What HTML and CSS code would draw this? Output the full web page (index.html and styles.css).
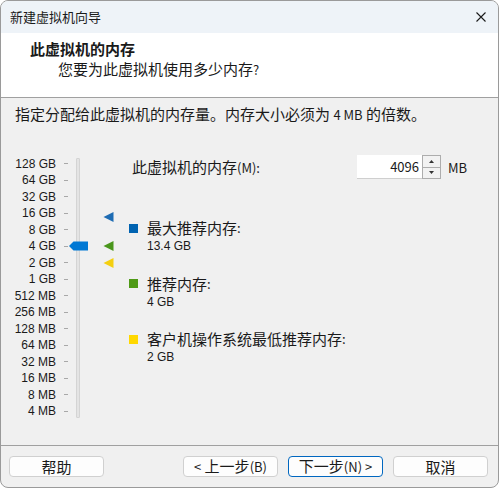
FILE: index.html
```html
<!DOCTYPE html>
<html lang="zh-CN">
<head>
    <meta charset="UTF-8">
    <meta name="viewport" content="width=device-width, initial-scale=1.0">
    <title>新建虚拟机向导</title>
    <link rel="stylesheet" href="styles.css">
</head>
<body>
    <div class="window">
        <!-- 标题栏 -->
        <div class="titlebar">
            <span class="title">新建虚拟机向导</span>
            <svg class="close" width="10" height="10" viewBox="0 0 10 10">
                <path d="M0.5 0.5 L9.5 9.5 M9.5 0.5 L0.5 9.5" stroke="#1a1a1a" stroke-width="1.1" fill="none"/>
            </svg>
        </div>

        <!-- 页眉 -->
        <div class="header">
            <div class="head-title">此虚拟机的内存</div>
            <div class="head-sub">您要为此虚拟机使用多少内存<span class="latin">?</span></div>
        </div>

        <!-- 内容 -->
        <div class="content">
            <p class="desc">指定分配给此虚拟机的内存量。内存大小必须为 <span class="latin">4 MB</span> 的倍数。</p>

            <div class="main">
                <div class="scale">
                    <ul class="labels">
                        <li><span>128 GB</span><i></i></li>
                        <li><span>64 GB</span><i></i></li>
                        <li><span>32 GB</span><i></i></li>
                        <li><span>16 GB</span><i></i></li>
                        <li><span>8 GB</span><i></i></li>
                        <li><span>4 GB</span><i></i></li>
                        <li><span>2 GB</span><i></i></li>
                        <li><span>1 GB</span><i></i></li>
                        <li><span>512 MB</span><i></i></li>
                        <li><span>256 MB</span><i></i></li>
                        <li><span>128 MB</span><i></i></li>
                        <li><span>64 MB</span><i></i></li>
                        <li><span>32 MB</span><i></i></li>
                        <li><span>16 MB</span><i></i></li>
                        <li><span>8 MB</span><i></i></li>
                        <li><span>4 MB</span><i></i></li>
                    </ul>
                    <div class="track"></div>

                    <!-- 滑块和标记 -->
                    <svg class="thumb" width="20" height="10" viewBox="0 0 20 10">
                        <path d="M0 5 L4.5 0.5 L19 0.5 L19 9.5 L4.5 9.5 Z" fill="#0078d4"/>
                    </svg>
                    <svg class="marker" style="top: 56px" width="11" height="10" viewBox="0 0 11 10">
                        <path d="M0.5 5 L10.5 0 L10.5 10 Z" fill="#1e6cb3"/>
                    </svg>
                    <svg class="marker" style="top: 85.5px" width="11" height="10" viewBox="0 0 11 10">
                        <path d="M0.5 5 L10.5 0 L10.5 10 Z" fill="#4a961c"/>
                    </svg>
                    <svg class="marker" style="top: 102px" width="11" height="10" viewBox="0 0 11 10">
                        <path d="M0.5 5 L10.5 0 L10.5 10 Z" fill="#f4cf10"/>
                    </svg>
                </div>

                <div class="panel">
                    <div class="mem-row">
                        <label class="mem-label">此虚拟机的内存<span class="latin">(M):</span></label>
                        <div class="spin">
                            <div class="spin-input">4096</div>
                            <div class="spin-btns">
                                <div class="spin-btn"><svg width="5" height="3" viewBox="0 0 5 3"><path d="M2.5 0 L5 3 L0 3 Z" fill="#333"/></svg></div>
                                <div class="spin-btn"><svg width="5" height="3" viewBox="0 0 5 3"><path d="M0 0 L5 0 L2.5 3 Z" fill="#333"/></svg></div>
                            </div>
                        </div>
                        <span class="unit">MB</span>
                    </div>

                    <div class="legend">
                        <div class="item">
                            <div class="item-label"><span class="sq blue"></span>最大推荐内存<span class="latin">:</span></div>
                            <div class="item-value">13.4 GB</div>
                        </div>
                        <div class="item">
                            <div class="item-label"><span class="sq green"></span>推荐内存<span class="latin">:</span></div>
                            <div class="item-value">4 GB</div>
                        </div>
                        <div class="item">
                            <div class="item-label"><span class="sq yellow"></span>客户机操作系统最低推荐内存<span class="latin">:</span></div>
                            <div class="item-value">2 GB</div>
                        </div>
                    </div>
                </div>
            </div>
        </div>

        <!-- 底部按钮 -->
        <div class="footer">
            <button class="btn">帮助</button>
            <div class="spacer"></div>
            <button class="btn"><span class="latin">&lt;</span> 上一步<span class="latin">(B)</span></button>
            <button class="btn primary">下一步<span class="latin">(N) &gt;</span></button>
            <button class="btn">取消</button>
        </div>
    </div>
</body>
</html>
```

FILE: styles.css
```css
* {
    box-sizing: border-box;
}
body {
    margin: 0;
    background: #ffffff;
    font-family: "Noto Sans CJK SC", sans-serif;
    font-size: 15px;
    color: #1a1a1a;
}
.latin {
    font-size: 13px;
}
.window {
    width: 499px;
    height: 488px;
    border: 1px solid #9a9a9a;
    border-radius: 8px;
    overflow: hidden;
    display: flex;
    flex-direction: column;
    background: #f0f0f0;
}
.titlebar {
    height: 32px;
    flex: none;
    background: #eef3f8;
    display: flex;
    align-items: center;
    justify-content: space-between;
    padding: 0 12px 0 9px;
}
.title {
    font-size: 13px;
    line-height: 18px;
    margin-top: -1px;
}
.close {
    display: block;
}
.header {
    height: 65px;
    flex: none;
    background: #ffffff;
    border-bottom: 1px solid #a0a0a0;
    padding: 6px 0 0 29px;
}
.head-title {
    font-weight: bold;
    line-height: 20px;
}
.head-sub {
    line-height: 20px;
    padding-left: 28px;
}
.content {
    flex: 1;
    padding: 6px 0 0 0;
}
.desc {
    margin: 0;
    padding-left: 14px;
    line-height: 20px;
}
.main {
    display: flex;
    margin-top: 30.75px;
}
.scale {
    position: relative;
    display: flex;
    width: 128px;
    flex: none;
}
.labels {
    list-style: none;
    margin: 0;
    padding: 0;
}
.labels li {
    display: flex;
    align-items: center;
    height: 16.47px;
    font-family: "Liberation Sans", sans-serif;
    font-size: 12px;
}
.labels span {
    width: 55px;
    text-align: right;
    line-height: 14px;
}
.labels i {
    width: 4px;
    height: 1px;
    margin-left: 8px;
    background: #a8a8a8;
}
.track {
    width: 4px;
    height: 260px;
    margin: 2px 0 0 8px;
    background: #e4e4e4;
    border: 1px solid #d4d4d4;
    border-radius: 1px;
}
.thumb {
    position: absolute;
    left: 68px;
    top: 85.5px;
}
.marker {
    position: absolute;
    left: 102px;
}
.panel {
    flex: 1;
}
.mem-row {
    display: flex;
    align-items: center;
    height: 24px;
    margin-top: -0.75px;
}
.mem-label {
    margin-left: 3px;
    width: 225px;
    line-height: 20px;
}
.spin {
    display: flex;
    height: 24px;
}
.spin-input {
    width: 65px;
    background: #ffffff;
    border-bottom: 1px solid #cfcfcf;
    text-align: right;
    padding-right: 3px;
    font-size: 13px;
    line-height: 23px;
}
.spin-btns {
    width: 19px;
    display: flex;
    flex-direction: column;
    border: 1px solid #adadad;
    background: #e8e8e8;
}
.spin-btn {
    flex: 1;
    display: flex;
    align-items: center;
    justify-content: center;
    background: #f2f2f2;
}
.spin-btn + .spin-btn {
    border-top: 1px solid #adadad;
}
.spin-btn svg {
    display: block;
}
.unit {
    margin-left: 7px;
    font-size: 13px;
}
.legend {
    margin-top: 40px;
}
.item + .item {
    margin-top: 19.5px;
}
.item-label {
    display: flex;
    align-items: center;
    line-height: 18px;
}
.item-value {
    padding-left: 18px;
    font-family: "Liberation Sans", sans-serif;
    font-size: 12px;
    line-height: 18px;
}
.sq {
    width: 9px;
    height: 9px;
    margin-right: 9px;
}
.sq.blue {
    background: #0063b1;
}
.sq.green {
    background: #4f9a16;
}
.sq.yellow {
    background: #ffd800;
}
.footer {
    height: 42px;
    flex: none;
    border-top: 1px solid #a0a0a0;
    display: flex;
    align-items: flex-start;
    padding: 10px 10px 0 8px;
    gap: 10px;
}
.spacer {
    flex: 1;
}
.btn {
    width: 95px;
    height: 21px;
    padding: 0;
    background: #fdfdfd;
    border: 1px solid #d0d0d0;
    border-radius: 4px;
    font-family: inherit;
    font-size: 15px;
    line-height: 18px;
    color: #1a1a1a;
}
.btn.primary {
    border-color: #0067c0;
}
```
